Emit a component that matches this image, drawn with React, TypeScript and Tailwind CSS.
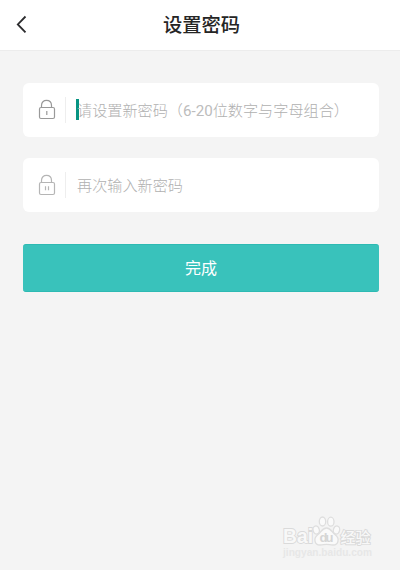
import type { ReactNode } from 'react';

function BackIcon() {
  return (
    <svg width="12" height="20" viewBox="0 0 12 20" fill="none" stroke="#2b2b2d" strokeWidth="1.8">
      <path d="M10.5 1.5 L2.8 9.4 L10.5 17.4" />
    </svg>
  );
}

function LockIcon({ confirm = false }: { confirm?: boolean }) {
  return (
    <svg
      width="18"
      height="22"
      viewBox="0 0 18 22"
      fill="none"
      stroke={confirm ? '#b5b5b5' : '#999999'}
      strokeWidth="1.2"
    >
      <path d="M3.5 8.5 V6.5 C3.5 3.2 5.6 1.4 8.5 1.4 C11.4 1.4 13.5 3.2 13.5 6.5 V8.5" />
      <rect x="1.5" y="8.5" width="15" height={confirm ? 12 : 11} rx="1.5" />
      {confirm ? <path d="M7.5 12.3 V16.3 M10.5 12.3 V16.3" /> : <path d="M8.8 12 V16" />}
    </svg>
  );
}

function Field({ icon, children, caret = false }: { icon: ReactNode; children: ReactNode; caret?: boolean }) {
  return (
    <label className="flex h-[54px] items-center rounded-[6px] bg-white pl-[15px]">
      {icon}
      <span className="ml-[9px] h-[26px] w-px bg-[#eeeeee]" />
      <span className="relative ml-[11px] whitespace-nowrap text-[15.15px] font-light leading-[22px] text-[#b0b0b0]">
        {caret && <span className="absolute -left-px top-0 h-[21px] w-[3px] bg-[#079482]" />}
        <span className="relative top-[0.5px]">{children}</span>
      </span>
    </label>
  );
}

function Watermark() {
  return (
    <svg className="absolute left-[281px] top-[514px]" width="94" height="46" viewBox="0 0 94 46">
      <g
        fontFamily="Liberation Sans, Noto Sans CJK SC, sans-serif"
        fill="#f8f8f8"
        stroke="#dadada"
        strokeWidth="1.8"
        paintOrder="stroke"
        fontWeight="700"
      >
        <text x="2" y="29" fontSize="20" textLength="30" lengthAdjust="spacingAndGlyphs">Bai</text>
        <text x="59.5" y="28.5" fontSize="15" textLength="30" fontWeight="500">经验</text>
      </g>
      <g fill="#fafafa" stroke="#dedede" strokeWidth="1.3">
        <ellipse cx="35.2" cy="16" rx="3.1" ry="4.1" transform="rotate(-15 35.2 16)" />
        <ellipse cx="41.5" cy="7.5" rx="3.2" ry="4.5" />
        <ellipse cx="49.8" cy="7.7" rx="3.2" ry="4.5" />
        <ellipse cx="55.5" cy="16" rx="3.1" ry="4.1" transform="rotate(15 55.5 16)" />
        <path d="M45.5 14 C41 14 40 18.5 36.5 21 C32.5 24 33 30.8 39 31 C42 31 43 30.3 45.5 30.3 C48 30.3 49 31 52 31 C58 30.8 58.5 24 54.5 21 C51 18.5 50 14 45.5 14 Z" />
      </g>
      <text x="38.5" y="28" fontFamily="Liberation Sans, sans-serif" fontSize="13" fontWeight="700" textLength="14" fill="#d6d6d6">
        du
      </text>
      <text
        x="2"
        y="41.5"
        fontFamily="Liberation Sans, sans-serif"
        fontSize="10.5"
        fontWeight="700"
        textLength="89"
        lengthAdjust="spacingAndGlyphs"
        fill="#e7e7e7"
      >
        jingyan.baidu.com
      </text>
    </svg>
  );
}

export default function App() {
  return (
    <div className="relative h-[570px] w-[400px] overflow-hidden bg-[#f4f4f4] font-[Roboto,'Noto_Sans_CJK_SC',sans-serif]">
      <header className="grid h-[51px] grid-cols-[100px_200px_100px] items-center border-b border-[#ececec] bg-white">
        <button className="flex pl-[15px]" aria-label="返回">
          <BackIcon />
        </button>
        <h1 className="pl-[3px] pt-[2px] text-center text-[19.3px] font-medium leading-[28px] text-[#252525]">设置密码</h1>
      </header>
      <main className="flex flex-col pl-[23px] pr-[21px] pt-8">
        <Field icon={<LockIcon />} caret>
          请设置新密码（<span className="font-normal text-[#bcbcbc]">6-20</span>位数字与字母组合）
        </Field>
        <div className="h-[21px]" />
        <Field icon={<LockIcon confirm />}>再次输入新密码</Field>
        <button className="mt-8 h-12 rounded-[3px] border-y border-[#2dbab3] bg-[#39c2bb] pt-[2px] text-[16px] text-white">
          完成
        </button>
      </main>
      <Watermark />
    </div>
  );
}
